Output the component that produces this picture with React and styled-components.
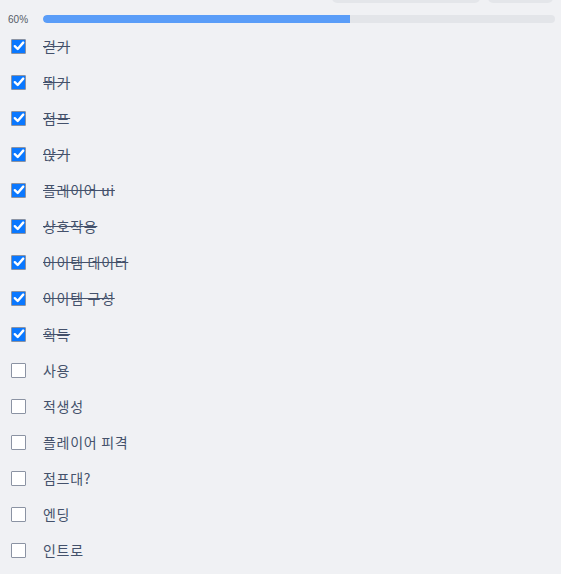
import React from "react";
import styled, { createGlobalStyle } from "styled-components";

const tasks = [
  { label: "걷기", done: true },
  { label: "뛰기", done: true },
  { label: "점프", done: true },
  { label: "앉기", done: true },
  { label: "플레이어 ui", done: true },
  { label: "상호작용", done: true },
  { label: "아이템 데이터", done: true },
  { label: "아이템 구성", done: true },
  { label: "획득", done: true },
  { label: "사용", done: false },
  { label: "적생성", done: false },
  { label: "플레이어 피격", done: false },
  { label: "점프대?", done: false },
  { label: "엔딩", done: false },
  { label: "인트로", done: false },
];

const App = () => {
  const done = tasks.filter((t) => t.done).length;
  const percent = Math.round((done / tasks.length) * 100);
  return (
    <>
      <GlobalStyle />
      <Page>
        <Toolbar>
          <ToolButton $width="148px" />
          <ToolButton $width="65px" />
        </Toolbar>
        <ProgressRow>
          <ProgressLabel>{percent}%</ProgressLabel>
          <Track>
            <Fill style={{ width: `${percent}%` }} />
          </Track>
        </ProgressRow>
        <List>
          {tasks.map((t) => (
            <Row key={t.label}>
              <Box $checked={t.done}>
                {t.done && (
                  <svg width="12" height="12" viewBox="0 0 12 12">
                    <path
                      d="M1.8 6.2 L4.7 9 L10.2 2.6"
                      fill="none"
                      stroke="#fff"
                      strokeWidth="2.4"
                      strokeLinecap="round"
                      strokeLinejoin="round"
                    />
                  </svg>
                )}
              </Box>
              <Label $done={t.done}>{t.label}</Label>
            </Row>
          ))}
        </List>
      </Page>
    </>
  );
};

const GlobalStyle = createGlobalStyle`
  body {
    margin: 0;
    background: #f0f1f4;
    font-family: "Noto Sans CJK KR", "Noto Sans", sans-serif;
  }
`;

const Page = styled.div`
  width: 561px;
  height: 574px;
  overflow: hidden;
`;

const Toolbar = styled.div`
  display: flex;
  justify-content: flex-end;
  gap: 8px;
  padding-right: 8px;
  margin-top: -27px;
`;

const ToolButton = styled.div`
  width: ${(p) => p.$width};
  height: 30px;
  border-radius: 5px;
  background: #e4e6ea;
`;

const ProgressRow = styled.div`
  display: flex;
  align-items: center;
  height: 8px;
  margin-top: 12px;
  padding-left: 8px;
`;

const ProgressLabel = styled.span`
  width: 35px;
  font-family: "Liberation Sans", sans-serif;
  font-size: 10px;
  color: #555b66;
`;

const Track = styled.div`
  width: 512px;
  height: 8px;
  border-radius: 4px;
  background: #e3e5e9;
  overflow: hidden;
`;

const Fill = styled.div`
  height: 100%;
  background: #5a9df8;
  border-radius: 4px 0 0 4px;
`;

const List = styled.div`
  display: flex;
  flex-direction: column;
  margin-top: 5px;
`;

const Row = styled.label`
  display: flex;
  align-items: center;
  height: 36px;
  padding-left: 11px;
`;

const Box = styled.span`
  box-sizing: border-box;
  width: 15px;
  height: 15px;
  border: 1px solid #8b93a3;
  border-radius: 1px;
  background: ${(p) => (p.$checked ? "#0a78ff" : "#ffffff")};
  display: flex;
  align-items: center;
  justify-content: center;
`;

const Label = styled.span`
  margin-left: 17px;
  font-size: 14px;
  letter-spacing: 0.7px;
  color: #44516b;
  text-decoration: ${(p) => (p.$done ? "line-through" : "none")};
`;

export default App;
